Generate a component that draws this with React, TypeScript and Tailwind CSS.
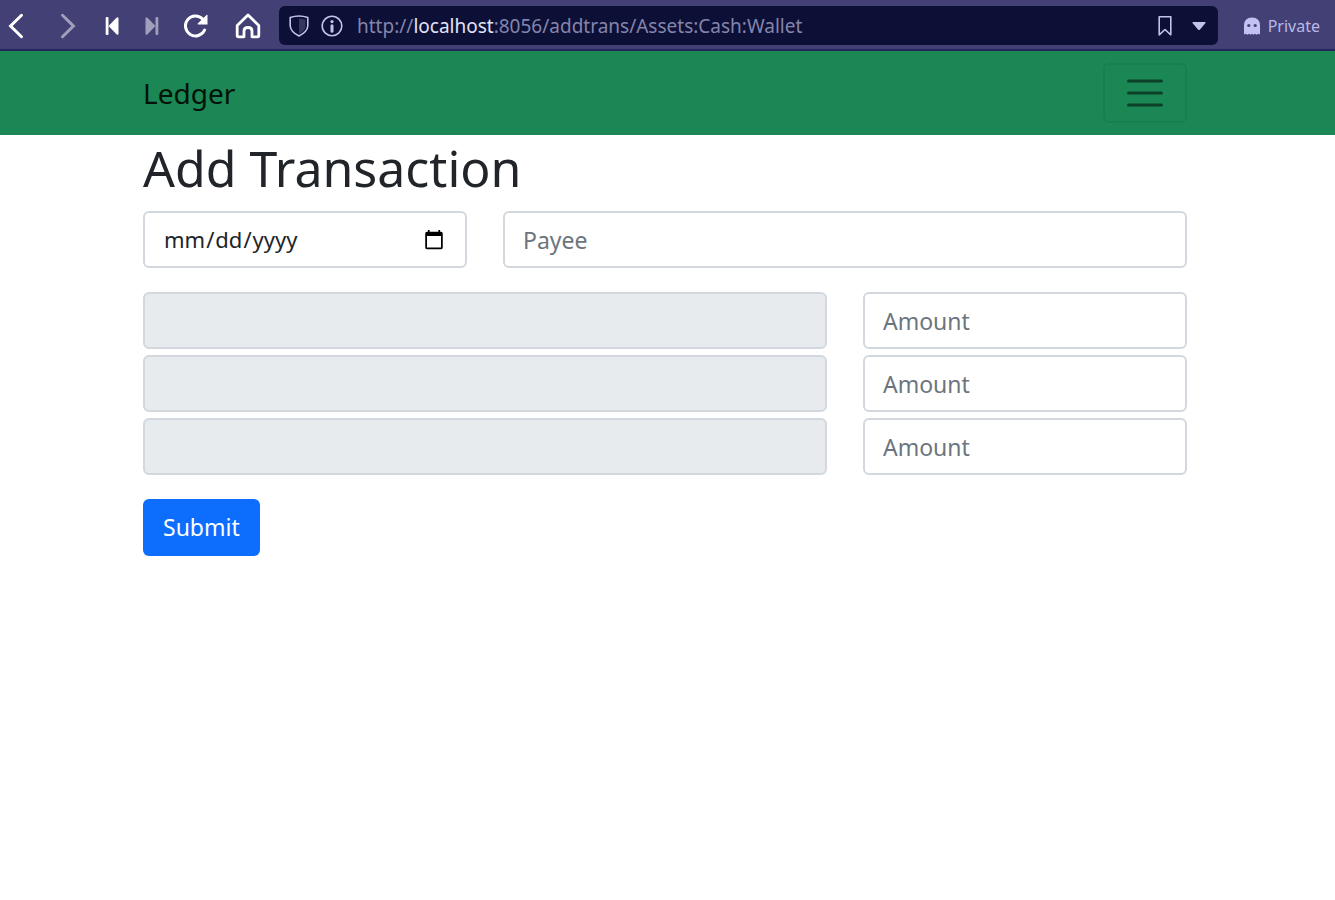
const transactionRows = [1, 2, 3];

const fieldClass =
  'h-[57px] w-full min-w-0 rounded-md border-2 border-[#d3d8de] px-[18px] text-[#212529] placeholder:text-[#6c757d] placeholder:opacity-100';

function BrowserBar() {
  return (
    <div className="flex h-[51px] items-center border-b-2 border-[#27245c] bg-[#424075] pt-0.5 text-white">
      <button type="button" aria-label="Back" className="grid h-10 w-8 place-items-center">
        <svg width="16" height="26" viewBox="0 0 16 26" fill="none" stroke="currentColor" strokeWidth="3">
          <path d="M13.500 2.300 2.600 13 13.500 23.700" strokeLinecap="round" />
        </svg>
      </button>
      <button type="button" aria-label="Forward" className="ml-5 grid h-10 w-8 place-items-center text-[#a19fba]">
        <svg width="16" height="26" viewBox="0 0 16 26" fill="none" stroke="currentColor" strokeWidth="3">
          <path d="M2.500 2.300 13.400 13 2.500 23.700" strokeLinecap="round" />
        </svg>
      </button>
      <button type="button" aria-label="Rewind" className="ml-2 grid h-10 w-10 place-items-center">
        <svg width="14" height="20" viewBox="0 0 14 20" fill="currentColor">
          <rect x="0.700" y="1" width="2.800" height="18" rx="1" />
          <path d="M3.500 10 11.500 1.800q2-1.500 2 1v14.400q0 2.500-2 1z" />
        </svg>
      </button>
      <button type="button" aria-label="Fast forward" className="grid h-10 w-10 place-items-center text-[#a19fba]">
        <svg width="14" height="20" viewBox="0 0 14 20" fill="currentColor">
          <rect x="10.500" y="1" width="2.800" height="18" rx="1" />
          <path d="M10.500 10 2.500 1.800q-2-1.500-2 1v14.400q0 2.500 2 1z" />
        </svg>
      </button>
      <button type="button" aria-label="Reload" className="grid h-10 w-12 place-items-center">
        <svg width="24" height="24" viewBox="0 0 24 24" fill="none">
          <path d="M20.600 16A10 10 0 1 1 18.700 5" stroke="currentColor" strokeWidth="3" strokeLinecap="round" />
          <path d="M23.500 1v9.500H14q-.8-.5 0-1.200L22.500 1q.6-.5 1 0z" fill="currentColor" />
        </svg>
      </button>
      <button type="button" aria-label="Home" className="grid h-10 w-14 place-items-center">
        <svg width="26" height="26" viewBox="0 0 26 26" fill="none" stroke="currentColor" strokeWidth="2.800" strokeLinejoin="round">
          <path d="M2.200 12.500 13 2l10.800 10.500V22.500q0 1.300-1.300 1.300H17v-6q0-3.300-4-3.300t-4 3.300v6H3.500q-1.300 0-1.300-1.300z" />
        </svg>
      </button>
      <div className="ml-[3px] flex h-[39px] min-w-0 flex-1 items-center rounded-md bg-[#0c1036] pr-3 pl-2.5 text-[#c3c1ee]">
        <svg className="shrink-0" width="20" height="22" viewBox="0 0 20 22">
          <path d="M10 3.500 16.500 4.500v7q-.7 4.500-6.500 7.500z" fill="#353661" />
          <path d="M1.200 2.500Q10-.5 18.800 2.500V11q-.6 6-8.800 10Q1.800 17 1.200 11z" fill="none" stroke="currentColor" strokeWidth="1.600" strokeLinejoin="round" />
        </svg>
        <svg className="ml-3 shrink-0" width="22" height="22" viewBox="0 0 22 22">
          <circle cx="11" cy="11" r="9.800" fill="none" stroke="currentColor" strokeWidth="1.600" />
          <circle cx="11" cy="6.600" r="1.600" fill="currentColor" />
          <path d="M11 10.700v5.500" stroke="currentColor" strokeWidth="3" strokeLinecap="round" />
        </svg>
        <p className="ml-[14px] min-w-0 flex-1 truncate pt-0.5 text-[19px] text-[#8584ab]">
          http://<span className="text-[#e3e2f6]">localhost</span>:8056/addtrans/Assets:Cash:Wallet
        </p>
        <button type="button" aria-label="Bookmark this page" className="shrink-0">
          <svg width="14" height="22" viewBox="0 0 14 22" fill="none" stroke="currentColor" strokeWidth="1.600" strokeLinejoin="round">
            <path d="M1.200 1.800h11.600v18L7 14.500l-5.800 5.300z" />
          </svg>
        </button>
        <button type="button" aria-label="Show history" className="ml-5 shrink-0">
          <svg width="14" height="8" viewBox="0 0 14 8" fill="currentColor">
            <path d="M1.500 0h11q2 0 .6 1.500L8 7.400q-1 1-2 0L.9 1.500Q-.5 0 1.500 0z" />
          </svg>
        </button>
      </div>
      <div className="flex items-center gap-2 pr-[15px] pl-[26px] text-[#bab8e6]">
        <svg width="16" height="18" viewBox="0 0 16 18">
          <path d="M0 17.500V8Q.3.400 8 .400T16 8v9.500l-1.600-.8-1.800 1.100-1.600-1.100-1.500 1.100L8 16.700l-1.500 1.100L5 16.700l-1.600 1.100-1.800-1.100z" fill="#c3c1f2" />
          <circle cx="4.800" cy="8.500" r="1.600" fill="#424075" />
          <circle cx="11.200" cy="8.500" r="1.600" fill="#424075" />
        </svg>
        <span className="text-base">Private</span>
      </div>
    </div>
  );
}

export default function App() {
  return (
    <div className="min-h-screen bg-white font-['Noto_Sans',sans-serif] text-[#212529]">
      <BrowserBar />
      <nav className="bg-[#1a8754] pr-[5px]">
        <div className="mx-auto flex h-[84px] max-w-[1044px] items-center justify-between">
          <a href="#" className="text-[28px] text-[#031109]">
            Ledger
          </a>
          <button
            type="button"
            aria-label="Toggle navigation"
            className="grid h-[60px] w-[84px] place-items-center rounded-md border-2 border-[#188050]"
          >
            <svg width="36" height="28" viewBox="0 0 36 28" stroke="#0d4028" strokeWidth="3" strokeLinecap="round">
              <path d="M1.500 2h33M1.500 14h33M1.500 26h33" />
            </svg>
          </button>
        </div>
      </nav>
      <main className="pr-[5px]">
        <form className="mx-auto max-w-[1044px]">
          <h1 className="mb-3 h-16 text-[50px] leading-[66px]">Add Transaction</h1>
          <div className="grid grid-cols-12 gap-x-9">
            <div className="col-span-4">
              <input type="date" aria-label="Date" className={`${fieldClass} text-[22px]`} />
            </div>
            <div className="col-span-8">
              <input type="text" aria-label="Payee" placeholder="Payee" className={`${fieldClass} text-[23px]`} />
            </div>
          </div>
          <div className="mt-6 grid grid-cols-12 gap-x-9 gap-y-1.5">
            {transactionRows.map((row) => (
              <div key={row} className="col-span-12 grid grid-cols-subgrid">
                <div className="col-span-8">
                  <input
                    type="text"
                    readOnly
                    aria-label={`Account ${row}`}
                    className={`${fieldClass} bg-[#e7ebee] text-[23px]`}
                  />
                </div>
                <div className="col-span-4">
                  <input
                    type="text"
                    aria-label={`Amount ${row}`}
                    placeholder="Amount"
                    className={`${fieldClass} text-[23px]`}
                  />
                </div>
              </div>
            ))}
          </div>
          <button type="submit" className="mt-6 h-[57px] rounded-md bg-[#0d6efd] px-5 text-[23px] text-white">
            Submit
          </button>
        </form>
      </main>
    </div>
  );
}
